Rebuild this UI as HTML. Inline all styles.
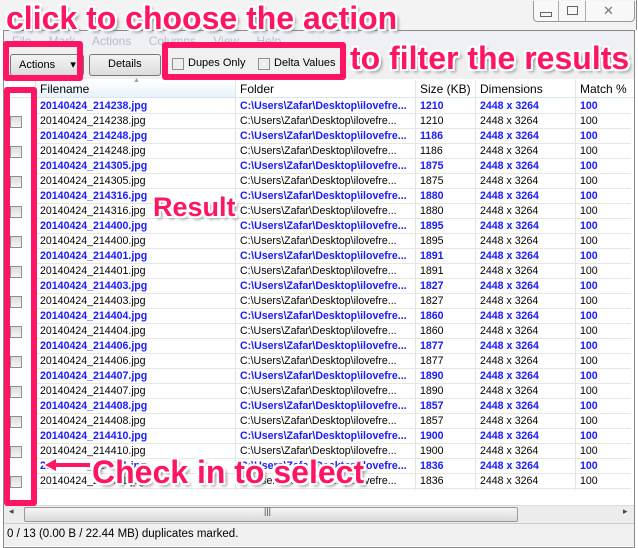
<!DOCTYPE html><html><head><style>
body{margin:0;width:638px;height:547px;overflow:hidden;background:#fff;font-family:"Liberation Sans",sans-serif;position:relative}
.a{position:absolute}
.t{font-size:11px;white-space:nowrap}
.row{position:absolute;left:36px;width:595px;height:15px;border-bottom:1px solid #e6e6e6;box-sizing:border-box;font-size:10.6px;line-height:14px}
.row span{position:absolute;top:0;overflow:hidden;white-space:nowrap}
.b{color:#1a1aff;font-weight:bold}
.cb{position:absolute;left:10px;width:10px;height:10px;border:1px solid #8e8f8f;background:linear-gradient(#dcdcdc,#f4f4f4)}
.pk{position:absolute;border:6px solid #ff1563;border-radius:3px;box-sizing:border-box}
.big{position:absolute;color:#ff1563;font-weight:bold;white-space:nowrap;text-shadow:-2px -2px 0 #fff,2px -2px 0 #fff,-2px 2px 0 #fff,2px 2px 0 #fff,0 2px 0 #fff,0 -2px 0 #fff,2px 0 0 #fff,-2px 0 0 #fff,3px 3px 3px #888}
.vl{position:absolute;top:80px;height:410px;width:1px;background:#e3e3e3}
</style></head><body>
<div class="a" style="left:0;top:0;width:636px;height:30px;background:#f3f3f3;border-right:1px solid #888"></div>
<div class="a" style="left:533px;top:1px;width:100px;height:20px;border:1px solid #999;border-top:none;border-radius:0 0 4px 4px;background:#f8f8f8"></div>
<div class="a" style="left:558px;top:1px;width:1px;height:20px;background:#aaa"></div>
<div class="a" style="left:585px;top:1px;width:1px;height:20px;background:#aaa"></div>
<div class="a" style="left:540px;top:12px;width:10px;height:3px;border:1px solid #666"></div>
<div class="a" style="left:567px;top:6px;width:9px;height:7px;border:1px solid #666"></div>
<div class="a t" style="left:603px;top:3px;color:#777;font-size:13px">✕</div>
<div class="a" style="left:3px;top:30px;width:630px;height:516px;border:1px solid #8a8a8a;background:#fff"></div>
<div class="a" style="left:4px;top:31px;width:630px;height:18px;background:#eef0f6"></div>
<div class="a t" style="left:12px;top:34px;color:#b8bcc6;font-size:12px;word-spacing:14px">File Mark Actions Columns View Help</div>
<div class="a" style="left:4px;top:49px;width:630px;height:30px;background:#f0f0f0"></div>
<div class="a" style="left:10px;top:54px;width:72px;height:20px;border:1px solid #777;border-radius:3px;background:linear-gradient(#f4f4f4,#dcdcdc)"></div>
<div class="a t" style="left:19px;top:58px">Actions&nbsp;&nbsp;&nbsp;&nbsp;&nbsp;▾</div>
<div class="a" style="left:89px;top:54px;width:70px;height:20px;border:1px solid #777;border-radius:3px;background:linear-gradient(#f4f4f4,#dcdcdc)"></div>
<div class="a t" style="left:108px;top:58px">Details</div>
<div class="a" style="left:172px;top:58px;width:10px;height:10px;border:1px solid #8e8f8f;background:#eee"></div>
<div class="a t" style="left:188px;top:57px">Dupes Only</div>
<div class="a" style="left:258px;top:58px;width:10px;height:10px;border:1px solid #8e8f8f;background:#eee"></div>
<div class="a t" style="left:274px;top:57px">Delta Values</div>
<div class="a" style="left:4px;top:79px;width:630px;height:18px;background:#fff;border-bottom:1px solid #d8e4ef"></div>
<div class="a" style="left:36px;top:80px;width:199px;height:17px;background:linear-gradient(#fff,#e8f3fb)"></div>
<div class="a t" style="left:133px;top:77px;font-size:7px;color:#8aa">▲</div>
<div class="a t" style="left:40px;top:82px;font-size:12px">Filename</div>
<div class="a t" style="left:240px;top:82px;font-size:12px">Folder</div>
<div class="a t" style="left:420px;top:82px;font-size:12px">Size (KB)</div>
<div class="a t" style="left:480px;top:82px;font-size:12px">Dimensions</div>
<div class="a t" style="left:580px;top:82px;font-size:12px">Match %</div>
<div class="vl" style="left:35px"></div><div class="vl" style="left:235px"></div><div class="vl" style="left:415px"></div><div class="vl" style="left:475px"></div><div class="vl" style="left:575px"></div>
<div id="rows"></div>
<script>
var d=[["214238",1210],["214248",1186],["214305",1875],["214316",1880],["214400",1895],["214401",1891],["214403",1827],["214404",1860],["214406",1877],["214407",1890],["214408",1857],["214410",1900],["214411",1836]];
var h="";
d.forEach(function(r,i){for(var k=0;k<2;k++){var y=99+15*(2*i+k);var c=k?"":" b";
h+='<div class="row'+c+'" style="top:'+y+'px"><span style="left:4px">20140424_'+r[0]+'.jpg</span><span style="left:204px;width:175px">C:\\Users\\Zafar\\Desktop\\ilovefre...</span><span style="left:384px">'+r[1]+'</span><span style="left:444px">2448 x 3264</span><span style="left:544px">100</span></div>';
if(k)h+='<div class="cb" style="top:'+(y+2)+'px"></div>';}});
document.getElementById("rows").innerHTML=h;
</script>
<div class="a" style="left:4px;top:505px;width:630px;height:17px;background:#ececec;border-top:1px solid #ddd"></div>
<div class="a t" style="left:9px;top:506px;font-size:9px;color:#444">◂</div>
<div class="a" style="left:24px;top:507px;width:492px;height:13px;border:1px solid #999;border-radius:2px;background:linear-gradient(#f5f5f5,#dadada)"></div>
<div class="a t" style="left:264px;top:506px;font-size:9px;color:#444">|||</div>
<div class="a t" style="left:623px;top:506px;font-size:9px;color:#444">▸</div>
<div class="a" style="left:4px;top:523px;width:630px;height:22px;background:#f0f0f0;border-top:1px solid #ccc"></div>
<div class="a t" style="left:7px;top:528px;font-size:11.5px">0 / 13 (0.00 B / 22.44 MB) duplicates marked.</div>
<div class="pk" style="left:3px;top:41px;width:80px;height:40px"></div>
<div class="pk" style="left:162px;top:42px;width:184px;height:38px"></div>
<div class="pk" style="left:4px;top:87px;width:33px;height:419px"></div>
<div class="big" style="left:6px;top:0px;font-size:32px">click to choose the action</div>
<div class="big" style="left:350px;top:40px;font-size:32px">to filter the results</div>
<div class="big" style="left:153px;top:192px;font-size:27px">Result</div>
<div class="big" style="left:92px;top:454px;font-size:32px">Check in to select</div>
<svg class="a" style="left:40px;top:456px" width="52" height="18"><path d="M50 9H14" stroke="#fff" stroke-width="8"/><path d="M2 9L16 1V17Z" fill="#fff"/><path d="M50 9H14" stroke="#ff1563" stroke-width="4"/><path d="M5 9L16 3V15Z" fill="#ff1563"/></svg>
</body></html>
